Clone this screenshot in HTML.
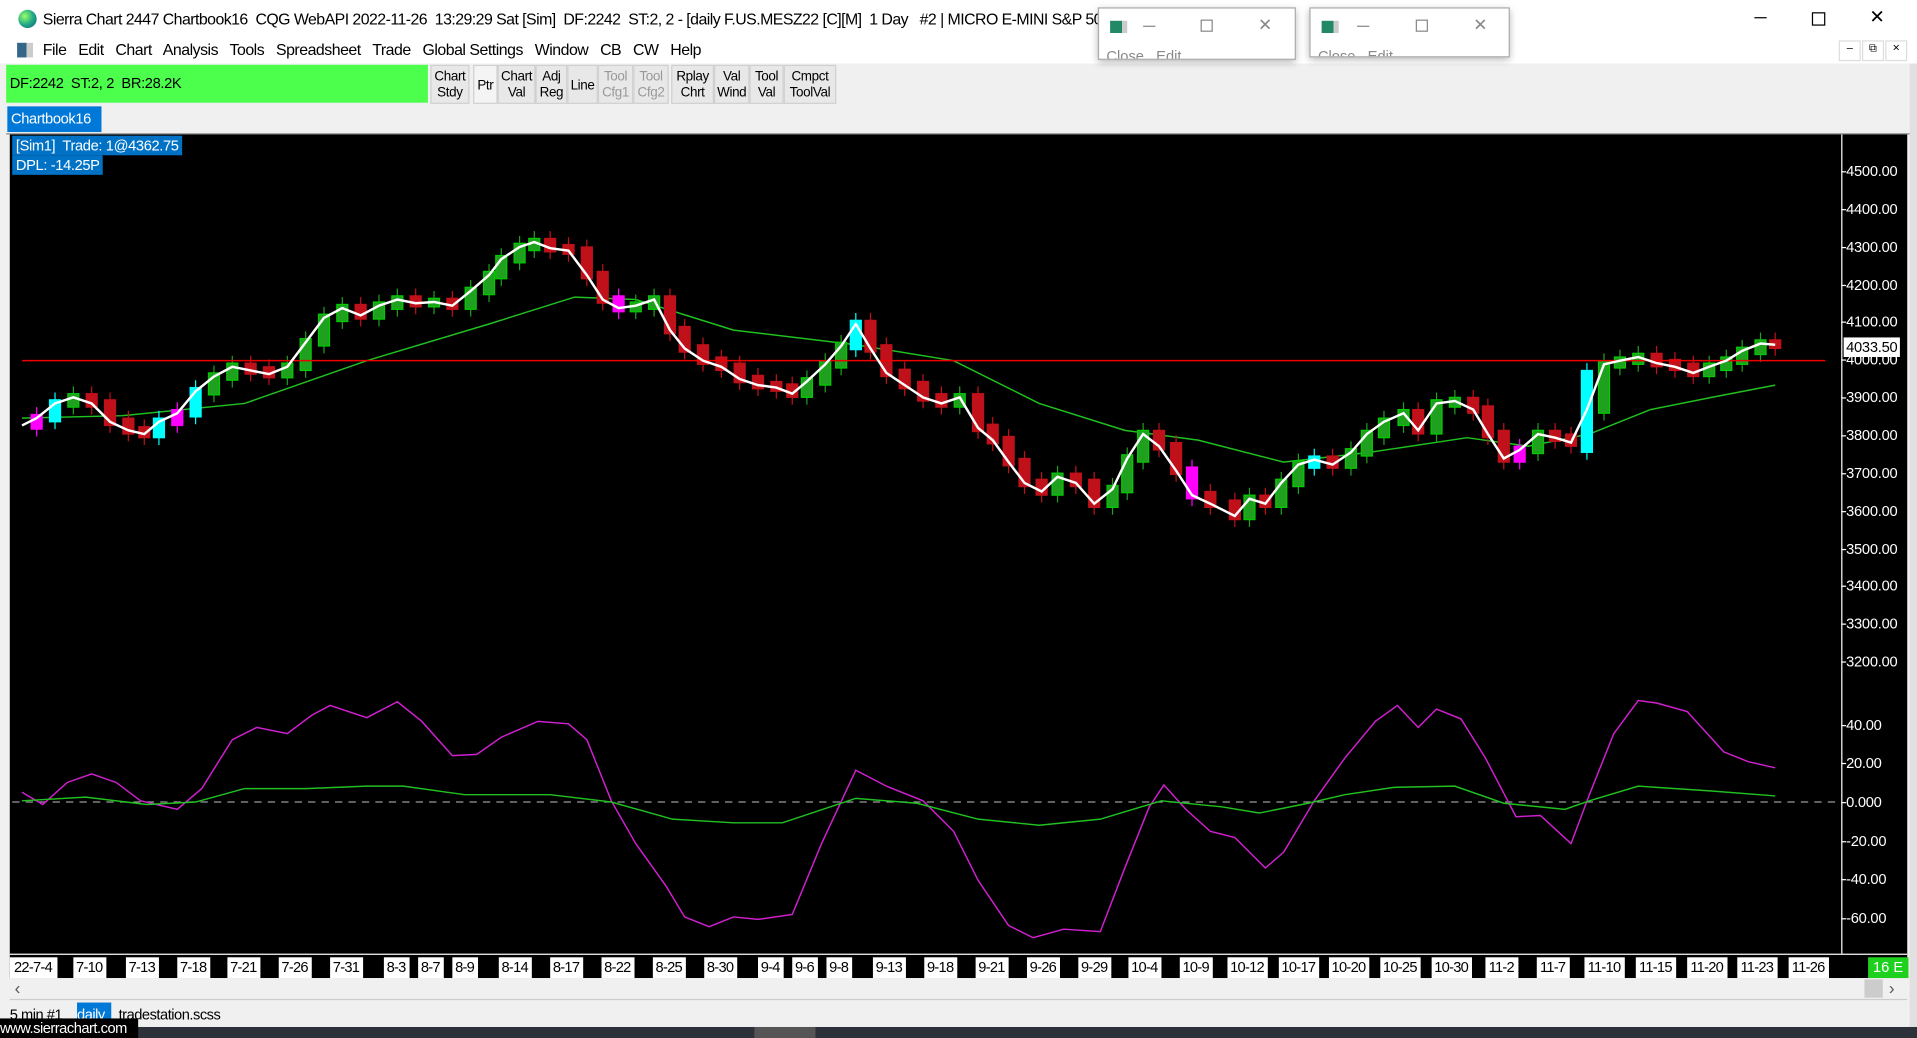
<!DOCTYPE html>
<html><head><meta charset="utf-8"><style>
*{margin:0;padding:0;box-sizing:border-box}
html,body{width:1917px;height:1038px;overflow:hidden;background:#f0f0f0;font-family:"Liberation Sans",sans-serif}
#s{position:absolute;left:0;top:0;width:1568px;height:849px;transform:scale(1.22258,1.22261);transform-origin:0 0;background:#f0f0f0}
.a{position:absolute;white-space:nowrap}
.btn{position:absolute;top:53px;height:32px;background:#e8e8e8;border:1px solid #d0d0d0;font-size:11px;text-align:center;line-height:13px;padding-top:3px;color:#000;letter-spacing:-0.3px}
.dis{color:#999}
.d{position:absolute;top:783px;height:17px;background:#fff;color:#000;font-size:12px;line-height:17px;letter-spacing:-0.6px}
.p{position:absolute;left:1510px;color:#fff;font-size:12px;letter-spacing:-0.2px}
.win{position:absolute;background:#fff;border:1px solid #aaa;box-shadow:0 2px 6px rgba(0,0,0,.3);overflow:hidden}
</style></head><body><div id="s">
<div class="a" style="left:0;top:0;width:1568px;height:52px;background:#fff"></div>
<div class="a" style="left:15px;top:8px;width:15px;height:15px;border-radius:50%;background:radial-gradient(circle at 35% 35%,#9f6,#2a8 50%,#157)"></div>
<div class="a" style="left:35px;top:8px;font-size:13px;letter-spacing:-0.45px">Sierra Chart 2447 Chartbook16&nbsp; CQG WebAPI 2022-11-26&nbsp; 13:29:29 Sat [Sim]&nbsp; DF:2242&nbsp; ST:2, 2 - [daily F.US.MESZ22 [C][M]&nbsp; 1 Day&nbsp; &nbsp;#2 | MICRO E-MINI S&amp;P 500 F</div>
<div class="a" style="left:1435px;top:14px;width:10px;height:1px;background:#000"></div>
<div class="a" style="left:1482px;top:10px;width:11px;height:11px;border:1px solid #000"></div>
<div class="a" style="left:1529px;top:5px;font-size:15px">✕</div>
<div class="a" style="left:14px;top:35px;width:13px;height:12px;background:linear-gradient(90deg,#368 60%,#ccc 60%)"></div>
<div class="a" style="left:35px;top:33px;font-size:13px;letter-spacing:-0.4px">File&nbsp;&nbsp; Edit&nbsp;&nbsp; Chart&nbsp;&nbsp; Analysis&nbsp;&nbsp; Tools&nbsp;&nbsp; Spreadsheet&nbsp;&nbsp; Trade&nbsp;&nbsp; Global Settings&nbsp;&nbsp; Window&nbsp;&nbsp; CB&nbsp;&nbsp; CW&nbsp;&nbsp; Help</div>
<div class="a" style="left:1504px;top:33px;width:18px;height:17px;border:1px solid #ddd;font-size:9px;text-align:center">–</div>
<div class="a" style="left:1523px;top:33px;width:18px;height:17px;border:1px solid #ddd;font-size:9px;text-align:center">⧉</div>
<div class="a" style="left:1542px;top:33px;width:18px;height:17px;border:1px solid #ddd;font-size:10px;text-align:center">×</div>
<div class="a" style="left:5px;top:52px;width:1557px;height:58px;background:#f0f0f0"></div>
<div class="a" style="left:5px;top:53px;width:345px;height:31px;background:#4cff4c;font-size:12px;line-height:31px;padding-left:3px;letter-spacing:-0.3px">DF:2242&nbsp; ST:2, 2&nbsp; BR:28.2K</div>
<div class="btn" style="left:352px;width:32px">Chart<br>Stdy</div>
<div class="btn" style="left:387px;width:20px;line-height:26px;background:#f4f4f4">Ptr</div>
<div class="btn" style="left:407px;width:31px">Chart<br>Val</div>
<div class="btn" style="left:438px;width:26px">Adj<br>Reg</div>
<div class="btn" style="left:464px;width:25px;line-height:26px">Line</div>
<div class="btn dis" style="left:489px;width:29px">Tool<br>Cfg1</div>
<div class="btn dis" style="left:518px;width:29px">Tool<br>Cfg2</div>
<div class="btn" style="left:549px;width:35px">Rplay<br>Chrt</div>
<div class="btn" style="left:584px;width:29px">Val<br>Wind</div>
<div class="btn" style="left:613px;width:28px">Tool<br>Val</div>
<div class="btn" style="left:641px;width:43px">Cmpct<br>ToolVal</div>
<div class="a" style="left:6px;top:87px;width:77px;height:21px;background:#0078d7;color:#fff;font-size:12px;line-height:21px;padding-left:3px;letter-spacing:-0.3px">Chartbook16</div>
<div class="a" style="left:5px;top:109px;width:1557px;height:1px;background:#888"></div>
<div class="a" style="left:1562px;top:52px;width:6px;height:797px;background:#e0e0e0"></div>
<div class="a" style="left:8px;top:110px;width:1552px;height:690px;background:#000"></div>
<div class="a" style="left:1506px;top:110px;width:1px;height:670px;background:#fff"></div>
<div class="a" style="left:8px;top:780px;width:1552px;height:1px;background:#fff"></div>
<svg class="a" style="left:0;top:0" width="1568" height="849" id="g"></svg>
<div class="a" style="left:10px;top:111px;background:#0072c6;color:#fff;font-size:12px;padding:0 3px;line-height:16px;letter-spacing:-0.3px">[Sim1]&nbsp; Trade: 1@4362.75</div>
<div class="a" style="left:10px;top:127px;background:#0072c6;color:#fff;font-size:12px;padding:0 3px;line-height:16px;letter-spacing:-0.3px">DPL: -14.25P</div>
<div id="px"></div>
<div class="a" style="left:1508px;top:276px;background:#fff;color:#000;font-size:12px;padding:0 2px;line-height:16px;letter-spacing:-0.2px">4033.50</div>
<div id="dt"></div>
<div class="a" style="left:1528px;top:783px;height:17px;background:#1fd11f;color:#fff;font-size:12px;line-height:17px;padding:0 4px">16 E</div>
<div class="a" style="left:8px;top:800px;width:1552px;height:18px;background:#f0f0f0;border-bottom:1px solid #ccc"></div>
<div class="a" style="left:12px;top:800px;font-size:14px;color:#555">‹</div>
<div class="a" style="left:1525px;top:801px;width:15px;height:15px;background:#ccc"></div>
<div class="a" style="left:1545px;top:800px;font-size:14px;color:#555">›</div>
<div class="a" style="left:8px;top:820px;font-size:12px;line-height:20px;letter-spacing:-0.4px">5 min #1</div>
<div class="a" style="left:63px;top:820px;width:28px;height:20px;background:#0078d7;color:#fff;font-size:12px;line-height:20px;letter-spacing:-0.4px">daily</div>
<div class="a" style="left:97px;top:820px;font-size:12px;line-height:20px;letter-spacing:-0.4px">tradestation.scss</div>
<div class="a" style="left:0;top:840px;width:1568px;height:9px;background:#2d3139"></div>
<div class="a" style="left:617px;top:840px;width:50px;height:9px;background:#555"></div>
<div class="a" style="left:0;top:833px;width:113px;height:16px;background:#000;color:#fff;font-size:12px;line-height:16px;letter-spacing:-0.4px">www.sierrachart.com</div>
<div class="win" style="left:898px;top:6px;width:162px;height:43px"><div class="a" style="left:9px;top:10px;width:14px;height:10px;background:linear-gradient(90deg,#286 70%,#ccc 70%)"></div><div class="a" style="left:36px;top:14px;width:10px;height:1px;background:#888"></div><div class="a" style="left:83px;top:9px;width:10px;height:10px;border:1px solid #888"></div><div class="a" style="left:130px;top:5px;color:#888;font-size:14px">✕</div><div class="a" style="left:6px;top:32px;color:#888;font-size:12px">Close&nbsp;&nbsp; Edit</div></div>
<div class="win" style="left:1071px;top:6px;width:164px;height:41px"><div class="a" style="left:9px;top:10px;width:14px;height:10px;background:linear-gradient(90deg,#286 70%,#ccc 70%)"></div><div class="a" style="left:38px;top:14px;width:10px;height:1px;background:#888"></div><div class="a" style="left:86px;top:9px;width:10px;height:10px;border:1px solid #888"></div><div class="a" style="left:133px;top:5px;color:#888;font-size:14px">✕</div><div class="a" style="left:6px;top:32px;color:#888;font-size:12px">Close&nbsp;&nbsp; Edit</div></div>
</div>
<script>
var g=document.getElementById('g'),h='';
function pl(a,c,w,da){return '<polyline fill="none" stroke="'+c+'" stroke-width="'+w+'" '+(da?'stroke-dasharray="'+da+'"':'')+' points="'+a.join(' ')+'"/>';}
var W=[18,348,30,342,45,330,60,325,75,330,90,345,105,352,118,355,130,345,145,338,160,320,175,308,190,300,205,303,220,306,235,300,250,280,265,260,280,252,295,258,310,250,325,245,340,248,355,247,370,250,385,238,400,225,410,212,425,202,437,198,450,203,465,205,480,225,493,245,506,252,520,250,535,245,548,270,560,285,575,295,590,300,605,310,620,315,635,317,648,322,660,312,675,298,688,283,700,265,712,285,725,305,740,315,755,325,770,330,785,325,800,350,812,360,825,378,838,395,852,402,865,390,880,395,895,412,910,400,922,375,935,355,948,365,962,385,975,405,990,412,1010,422,1022,408,1035,412,1048,395,1062,380,1075,376,1090,380,1105,370,1118,355,1132,345,1148,338,1160,352,1175,330,1190,328,1205,335,1217,355,1230,375,1243,368,1258,355,1272,358,1285,362,1298,335,1312,298,1325,295,1340,292,1355,297,1370,300,1385,305,1398,300,1412,295,1425,287,1440,281,1452,282];
var pts=[];for(var i=0;i<W.length;i+=2)pts.push(W[i]+','+W[i+1]);
var cy={45:1,130:1,160:1,700:1,1075:1,1298:1},mg={30:1,145:1,506:1,975:1,1243:1};
for(var i=2;i<W.length;i+=2){var x=W[i],y=W[i+1],py=W[i-1];var t=Math.min(y,py)-3,b=Math.max(y,py)+3;if(b-t<5)b=t+5;
var c=y<py?'#1fa01f':'#c0101a';if(cy[x])c='#0ff';if(mg[x])c='#f0f';
if(x==1298){t=303;b=370;}
h+='<line x1="'+x+'" x2="'+x+'" y1="'+(t-6)+'" y2="'+(b+6)+'" stroke="'+c+'"/><rect x="'+(x-4.5)+'" y="'+t+'" width="9" height="'+(b-t)+'" fill="'+c+'" stroke="'+(c=='#1fa01f'?'#0c0':c)+'"/>';}
var G=[18,342,100,340,200,330,300,295,400,265,470,243,520,245,600,270,700,282,780,295,850,330,920,352,980,360,1050,378,1120,370,1200,358,1250,365,1300,355,1350,335,1400,325,1452,315];
var gp=[];for(var i=0;i<G.length;i+=2)gp.push(G[i]+','+G[i+1]);
h=pl(gp,'#1fc01f',1.2)+h+'<line x1="18" x2="1493" y1="295" y2="295" stroke="#e00" stroke-width="1.2"/>'+pl(pts,'#fff',2);
var M=[18,648,35,658,55,640,75,633,95,640,115,655,145,662,165,645,190,605,210,595,235,600,255,585,270,577,300,587,325,574,345,590,370,618,390,617,410,603,440,590,465,592,480,605,500,655,520,690,545,725,560,750,580,758,600,750,620,752,648,748,672,690,700,630,725,643,755,655,780,680,800,720,825,757,845,767,870,760,900,762,920,710,940,660,952,642,970,662,990,680,1010,685,1035,710,1050,697,1075,655,1100,620,1125,590,1143,577,1160,595,1175,580,1195,588,1215,620,1240,668,1260,667,1285,690,1300,650,1320,600,1340,573,1355,575,1380,582,1410,615,1430,623,1452,628];
var L=[18,655,70,652,120,658,160,656,200,645,250,645,300,643,330,643,380,650,450,650,500,656,550,670,600,673,640,673,700,653,750,657,800,670,850,675,900,670,950,655,1000,660,1030,665,1070,657,1100,650,1140,644,1190,643,1230,657,1280,662,1300,655,1340,643,1400,647,1452,651];
function P(a){var r=[];for(var i=0;i<a.length;i+=2)r.push(a[i]+','+a[i+1]);return r;}
h+='<line x1="10" x2="1505" y1="656" y2="656" stroke="#999" stroke-dasharray="6,5"/>'+pl(P(M),'#d020d0',1.2)+pl(P(L),'#20c020',1.2);
g.innerHTML=h;
var px='',v=[4500,4400,4300,4200,4100,4000,3900,3800,3700,3600,3500,3400,3300,3200];
v.forEach(function(p){var y=140+(4500-p)*0.3085;px+='<div class="p" style="top:'+(y-7)+'px">'+p+'.00</div><div class="a" style="left:1506px;top:'+y+'px;width:4px;height:1px;background:#fff"></div>';});
[['40.00',593],['20.00',624],['0.000',656],['-20.00',688],['-40.00',719],['-60.00',751]].forEach(function(a){px+='<div class="p" style="top:'+(a[1]-7)+'px">'+a[0]+'</div><div class="a" style="left:1506px;top:'+a[1]+'px;width:4px;height:1px;background:#fff"></div>';});
document.getElementById('px').innerHTML=px;
var D=[['22-7-4',27],['7-10',73],['7-13',116],['7-18',158],['7-21',199],['7-26',241],['7-31',283],['8-3',324],['8-7',352],['8-9',380],['8-14',421],['8-17',463],['8-22',505],['8-25',547],['8-30',589],['9-4',630],['9-6',658],['9-8',686],['9-13',727],['9-18',769],['9-21',811],['9-26',853],['9-29',895],['10-4',936],['10-9',978],['10-12',1020],['10-17',1062],['10-20',1103],['10-25',1145],['10-30',1187],['11-2',1228],['11-7',1270],['11-10',1312],['11-15',1354],['11-20',1396],['11-23',1437],['11-26',1479]];
var dt='';D.forEach(function(d){var w=d[0].length*6+3;dt+='<div class="d" style="left:'+(d[1]-w/2)+'px;width:'+w+'px;text-align:center">'+d[0]+'</div>';});
document.getElementById('dt').innerHTML=dt;
</script>
</body></html>
